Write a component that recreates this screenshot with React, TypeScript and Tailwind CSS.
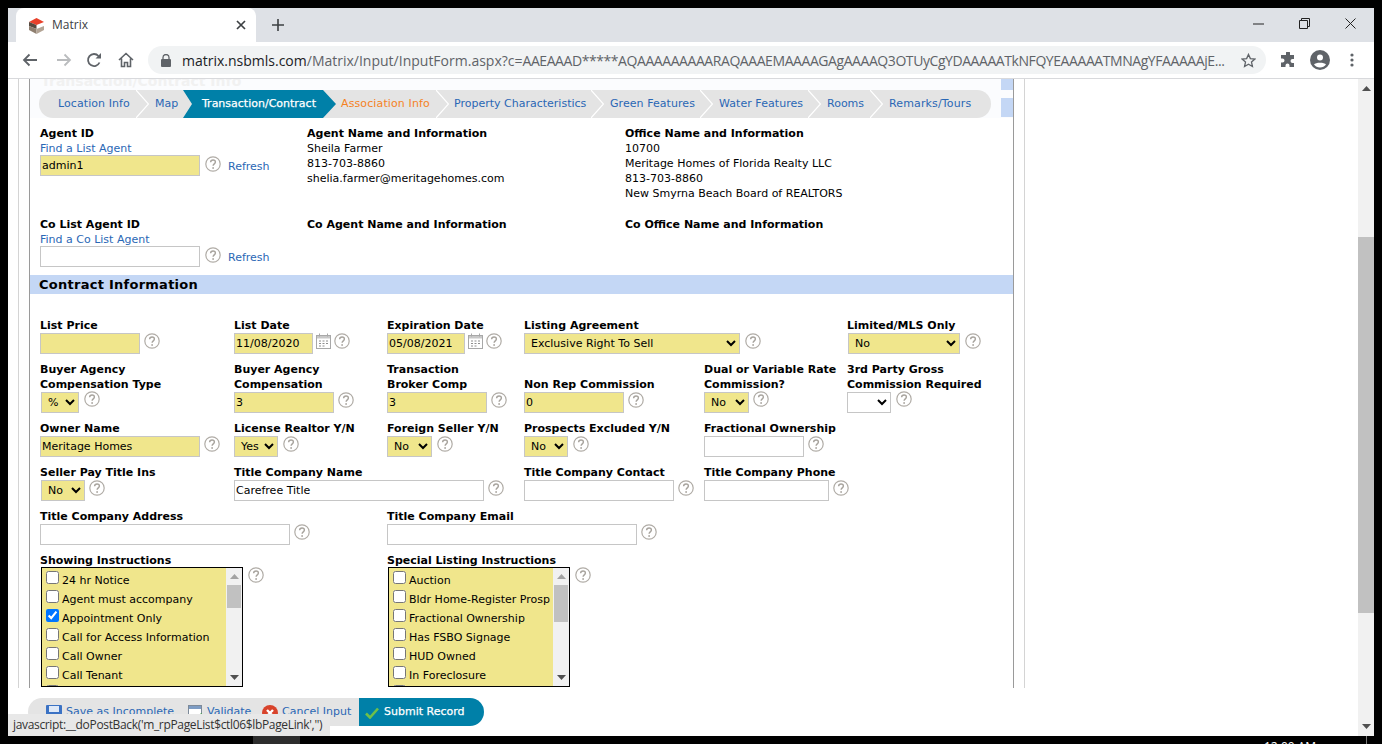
import { ReactNode } from 'react';

const yellow = 'bg-[#f0e68c]';

function Help({ className = '' }: { className?: string }) {
  return (
    <svg width="16" height="16" viewBox="0 0 16 16" className={`shrink-0 ${className}`} fill="none">
      <circle cx="8" cy="8" r="7.2" stroke="#b0aca6" strokeWidth="1.2" />
      <path d="M5.6 6.2C5.7 4.8 6.7 4 8 4c1.4 0 2.4.9 2.4 2 0 1.8-2.3 1.9-2.3 3.8" stroke="#a8a49e" strokeWidth="1.4" />
      <circle cx="8.1" cy="12" r="0.9" fill="#a8a49e" />
    </svg>
  );
}

function Calendar() {
  return (
    <svg width="15" height="16" viewBox="0 0 15 16" className="shrink-0" fill="none">
      <rect x="0.5" y="2.5" width="14" height="13" fill="#fff" stroke="#a8a8a8" />
      <rect x="1" y="3" width="13" height="2.5" fill="#c8c8c8" />
      <path d="M3.5 0.5v3M11.500 0.5v3" stroke="#a8a8a8" />
      <path d="M3 8h2M6.500 8h2M10 8h2M3 10.500h2M6.500 10.500h2M10 10.500h2M3 13h2M6.500 13h2" stroke="#8e8e8e" />
    </svg>
  );
}

function TextBox({ value = '', width, filled }: { value?: string; width: string; filled?: boolean }) {
  return (
    <input
      type="text"
      defaultValue={value}
      className={`${width} h-[21px] shrink-0 border border-[#c6c6c6] px-[1px] text-[11px] text-black ${filled ? yellow : 'bg-white'}`}
    />
  );
}

function Drop({ value = '', width, filled = true }: { value?: string; width: string; filled?: boolean }) {
  return (
    <select
      defaultValue={value}
      className={`${width} h-[21px] shrink-0 border border-[#c6c6c6] pl-[2px] text-[11px] text-black ${filled ? yellow : 'bg-white'}`}
    >
      <option value={value}>{value}</option>
    </select>
  );
}

function Field({ label, children, className = '' }: { label: ReactNode; children: ReactNode; className?: string }) {
  return (
    <div className={`flex flex-col justify-end ${className}`}>
      <div className="font-bold leading-[15px] whitespace-nowrap">{label}</div>
      <div className="flex items-start">{children}</div>
    </div>
  );
}

function ListBox({ width, items, thumb }: { width: string; items: [string, boolean][]; thumb: string }) {
  return (
    <div className={`${width} ${yellow} -mt-[1px] h-[120px] border border-black flex overflow-hidden shrink-0`}>
      <div className="flex-1 min-w-0 overflow-hidden pl-[4px] pt-[4px]">
        {items.map(([name, on]) => (
          <label key={name} className="flex h-[19px] items-start whitespace-nowrap">
            <input type="checkbox" defaultChecked={on} className="m-0 -mt-[1px] mr-[3px] h-[13px] w-[13px] shrink-0" />
            <span className="pt-[1px] leading-[15px]">{name}</span>
          </label>
        ))}
      </div>
      <div className="w-[16px] shrink-0 bg-[#f1f1f1] flex flex-col items-center pt-[6px]">
        <svg width="9" height="5" viewBox="0 0 9 5"><path d="M0 5 4.500 0 9 5z" fill="#a3a3a3" /></svg>
        <div className={`w-[14px] ${thumb} mt-[6px] bg-[#c1c1c1]`} />
        <svg width="9" height="5" viewBox="0 0 9 5" className="mt-auto mb-[6px]"><path d="M0 0 4.500 5 9 0z" fill="#505050" /></svg>
      </div>
    </div>
  );
}

function Chevron({ className }: { className: string }) {
  return (
    <svg width="13" height="28" viewBox="0 0 13 28" className={`shrink-0 ${className}`} fill="none">
      <path d="M0 0 12.500 14 0 28" stroke="#fff" strokeWidth="1.200" />
    </svg>
  );
}

function TabLink({ children, className }: { children: ReactNode; className: string }) {
  return <span className={`shrink-0 whitespace-nowrap text-[#2a67b5] ${className}`}>{children}</span>;
}

function TabBar() {
  return (
    <div className="ml-[9px] flex h-[28px] w-[952px] items-center overflow-hidden rounded-full bg-[#e4e4e4]">
      <TabLink className="ml-[19px] w-[72px] tracking-[0.08px]">Location Info</TabLink>
      <Chevron className="ml-[6px]" />
      <TabLink className="ml-[6px] w-[23px]">Map</TabLink>
      <div className="ml-[5px] flex h-full w-[153px] shrink-0 items-center bg-[#0080a8] pl-[19px] text-white whitespace-nowrap [-webkit-text-stroke:0.25px_#fff] [clip-path:polygon(0_0,140px_0,153px_50%,140px_100%,0_100%,9px_50%)]">
        Transaction/Contract
      </div>
      <span className="ml-[5px] w-[88px] shrink-0 whitespace-nowrap text-[#f5821f] tracking-[0.12px]">Association Info</span>
      <Chevron className="ml-[7px]" />
      <TabLink className="ml-[5px] w-[132px]">Property Characteristics</TabLink>
      <Chevron className="ml-[5px]" />
      <TabLink className="ml-[6px] w-[85px] tracking-[0.06px]">Green Features</TabLink>
      <Chevron className="ml-[5px]" />
      <TabLink className="ml-[6px] w-[84px] tracking-[0.06px]">Water Features</TabLink>
      <Chevron className="ml-[5px]" />
      <TabLink className="ml-[6px] w-[37px]">Rooms</TabLink>
      <Chevron className="ml-[6px]" />
      <TabLink className="ml-[6px] w-[83px] tracking-[0.14px]">Remarks/Tours</TabLink>
    </div>
  );
}

function ChromeBar() {
  return (
    <>
      <div className="flex h-[34px] items-end bg-[#dee1e6] pl-[8px]">
        <div className="flex h-[34px] w-[240px] items-center rounded-t-[8px] bg-white pl-[13px]">
          <svg width="15" height="17" viewBox="0 0 15 17">
            <path d="M0 5 7.500 1 15 5 7.500 8z" fill="#e8412b" />
            <path d="M0 5 7.500 8 7.500 12 0 9z" fill="#55493f" />
            <path d="M0 9 7.500 12 7.500 17 0 13z" fill="#8f7f70" />
            <path d="M7.500 12 15 9 15 13 7.500 17z" fill="#b3a495" />
          </svg>
          <span className="ml-[8px] text-[12px] text-[#3c4043]">Matrix</span>
          <svg width="10" height="10" viewBox="0 0 10 10" className="ml-[148px]"><path d="M1 1l8 8M9 1 1 9" stroke="#3c4043" strokeWidth="1.700" /></svg>
        </div>
        <svg width="12" height="12" viewBox="0 0 12 12" className="mb-[11px] ml-[16px]"><path d="M6 0v12M0 6h12" stroke="#3c4043" strokeWidth="1.600" /></svg>
        <div className="mb-[13px] ml-auto flex items-center text-[#3c4043]">
          <svg width="11" height="2" viewBox="0 0 11 2"><path d="M0 1h11" stroke="#222" /></svg>
          <svg width="11" height="11" viewBox="0 0 11 11" className="ml-[35px]" fill="none"><path d="M.5 2.500h8v8h-8zM2.500 2.500v-2h8v8h-2" stroke="#222" /></svg>
          <svg width="11" height="11" viewBox="0 0 11 11" className="ml-[35px] mr-[18px]"><path d="M.5.5l10 10M10.500.5l-10 10" stroke="#222" /></svg>
        </div>
      </div>
      <div className="flex h-[37px] items-start border-b border-[#d8d9dc] bg-white">
        <div className="flex h-[36px] items-center pl-[10px]">
          <svg width="16" height="14" viewBox="0 0 16 14" className="ml-[4px]" fill="none"><path d="M15 7H2M7.500 1.500 2 7l5.500 5.500" stroke="#5f6368" strokeWidth="1.800" /></svg>
          <svg width="16" height="14" viewBox="0 0 16 14" className="ml-[18px]" fill="none"><path d="M1 7h13M8.500 1.500 14 7l-5.500 5.500" stroke="#babcbe" strokeWidth="1.800" /></svg>
          <svg width="16" height="16" viewBox="0 0 16 16" className="ml-[14px]" fill="none"><path d="M13.500 10.500A6 6 0 1 1 12.500 4" stroke="#5f6368" strokeWidth="1.800" /><path d="M9.500 6.500h5.500V1z" fill="#5f6368" /></svg>
          <svg width="16" height="16" viewBox="0 0 16 16" className="ml-[16px]" fill="none"><path d="M1 8 8 1.500 15 8M3.500 6.500v8h3v-4h3v4h3v-8" stroke="#5f6368" strokeWidth="1.600" /></svg>
        </div>
        <div className="ml-[14px] mt-[4px] flex h-[28px] w-[1118px] items-center rounded-full bg-[#f1f3f4] pl-[13px] pr-[10px]">
          <svg width="10" height="13" viewBox="0 0 10 13"><path d="M2 5.500V3.500a3 3 0 0 1 6 0v2" fill="none" stroke="#5f6368" strokeWidth="1.300" /><rect y="5" width="10" height="8" rx="1" fill="#5f6368" /></svg>
          <span className="ml-[11px] w-[1048px] whitespace-nowrap text-[14px] text-[#202124] [font-family:'Open_Sans',sans-serif]">
            matrix.nsbmls.com<span className="text-[#5f6368]">/Matrix/Input/InputForm.aspx?c=<span className="tracking-[-0.43px]">AAEAAAD*****AQAAAAAAAAARAQAAAEMAAAAGAgAAAAQ3OTUyCgYDAAAAATkNFQYEAAAAATMNAgYFAAAAAjE...</span></span>
          </span>
          <svg width="15" height="15" viewBox="0 0 16 16" className="ml-auto" fill="none"><path d="M8 1.500 10 6l4.800.5-3.600 3.200 1 4.700L8 12l-4.200 2.400 1-4.700L1.200 6.500 6 6z" stroke="#5f6368" strokeWidth="1.400" /></svg>
        </div>
        <div className="flex h-[36px] items-center">
          <svg width="16" height="16" viewBox="0 0 16 16" className="ml-[14px]"><path d="M6 1a2 2 0 0 1 4 0v2h4v4h-1.500a2 2 0 0 0 0 4H14v4H9.500v-1.500a2 2 0 0 0-4 0V15H1v-4.500h1.500a2 2 0 0 0 0-4H1V3h5z" fill="#5f6368" /></svg>
          <svg width="20" height="20" viewBox="0 0 20 20" className="ml-[14px]"><circle cx="10" cy="10" r="10" fill="#5f6368" /><circle cx="10" cy="7.500" r="3" fill="#fff" /><path d="M4 14.500c1.500-2.500 10.500-2.500 12 0-1.500 2-3.500 3-6 3s-4.500-1-6-3z" fill="#fff" /></svg>
          <svg width="4" height="14" viewBox="0 0 4 14" className="ml-[20px]"><circle cx="2" cy="2" r="1.600" fill="#5f6368" /><circle cx="2" cy="7" r="1.600" fill="#5f6368" /><circle cx="2" cy="12" r="1.600" fill="#5f6368" /></svg>
        </div>
      </div>
    </>
  );
}

function AgentSection() {
  return (
    <div className="grid grid-cols-[267px_318px_1fr] pl-[10px] pt-[8px]">
      <div>
        <div className="font-bold leading-[15px]">Agent ID</div>
        <div className="h-[14px] leading-[15px] text-[#2a67b5]">Find a List Agent</div>
        <div className="flex items-start">
          <TextBox value="admin1" width="w-[160px]" filled />
          <Help className="ml-[5px] mt-[1px]" />
          <span className="ml-[7px] mt-[4px] leading-[15px] text-[#2a67b5]">Refresh</span>
        </div>
      </div>
      <div className="leading-[15px]">
        <div className="font-bold">Agent Name and Information</div>
        <div>Sheila Farmer</div>
        <div>813-703-8860</div>
        <div>shelia.farmer@meritagehomes.com</div>
      </div>
      <div className="leading-[15px]">
        <div className="font-bold">Office Name and Information</div>
        <div>10700</div>
        <div>Meritage Homes of Florida Realty LLC</div>
        <div>813-703-8860</div>
        <div>New Smyrna Beach Board of REALTORS</div>
      </div>
      <div className="mt-[16px]">
        <div className="font-bold leading-[15px]">Co List Agent ID</div>
        <div className="h-[14px] leading-[15px] text-[#2a67b5]">Find a Co List Agent</div>
        <div className="flex items-start">
          <TextBox width="w-[160px]" />
          <Help className="ml-[5px] mt-[1px]" />
          <span className="ml-[7px] mt-[4px] leading-[15px] text-[#2a67b5]">Refresh</span>
        </div>
      </div>
      <div className="mt-[16px] font-bold leading-[15px]">Co Agent Name and Information</div>
      <div className="mt-[16px] font-bold leading-[15px]">Co Office Name and Information</div>
    </div>
  );
}

function ContractForm() {
  return (
    <div className="grid grid-cols-[194px_153px_137px_180px_143px_1fr] gap-y-[8px] pl-[10px] pt-[24px]">
      <Field label="List Price"><TextBox width="w-[100px]" filled /><Help className="ml-[4px]" /></Field>
      <Field label="List Date"><TextBox value="11/08/2020" width="w-[79px]" filled /><span className="ml-[3px]"><Calendar /></span><Help className="ml-[3px]" /></Field>
      <Field label="Expiration Date"><TextBox value="05/08/2021" width="w-[78px]" filled /><span className="ml-[3px]"><Calendar /></span><Help className="ml-[3px]" /></Field>
      <Field label="Listing Agreement" className="col-span-2"><Drop value="Exclusive Right To Sell" width="w-[216px]" /><Help className="ml-[5px]" /></Field>
      <Field label="Limited/MLS Only"><div className="ml-[1px]" /><Drop value="No" width="w-[112px]" /><Help className="ml-[5px]" /></Field>

      <Field label={<>Buyer Agency<br />Compensation Type</>}><div className="ml-[1px]" /><Drop value="%" width="w-[38px]" /><Help className="ml-[5px] -mt-[1px]" /></Field>
      <Field label={<>Buyer Agency<br />Compensation</>}><TextBox value="3" width="w-[100px]" filled /><Help className="ml-[4px]" /></Field>
      <Field label={<>Transaction<br />Broker Comp</>}><TextBox value="3" width="w-[100px]" filled /><Help className="ml-[4px]" /></Field>
      <Field label="Non Rep Commission"><TextBox value="0" width="w-[100px]" filled /><Help className="ml-[4px]" /></Field>
      <Field label={<>Dual or Variable Rate<br />Commission?</>}><Drop value="No" width="w-[45px]" /><Help className="ml-[4px] -mt-[1px]" /></Field>
      <Field label={<>3rd Party Gross<br />Commission Required</>}><Drop width="w-[44px]" filled={false} /><Help className="ml-[5px] -mt-[1px]" /></Field>

      <Field label="Owner Name"><TextBox value="Meritage Homes" width="w-[160px]" filled /><Help className="ml-[4px]" /></Field>
      <Field label="License Realtor Y/N"><Drop value="Yes" width="w-[44px]" /><Help className="ml-[5px]" /></Field>
      <Field label="Foreign Seller Y/N"><Drop value="No" width="w-[45px]" /><Help className="ml-[5px]" /></Field>
      <Field label="Prospects Excluded Y/N"><Drop value="No" width="w-[44px]" /><Help className="ml-[5px]" /></Field>
      <Field label="Fractional Ownership" className="col-span-2"><TextBox width="w-[100px]" /><Help className="ml-[4px]" /></Field>

      <Field label="Seller Pay Title Ins"><div className="ml-[1px]" /><Drop value="No" width="w-[44px]" /><Help className="ml-[4px]" /></Field>
      <Field label="Title Company Name" className="col-span-2"><TextBox value="Carefree Title" width="w-[250px]" /><Help className="ml-[4px]" /></Field>
      <Field label="Title Company Contact"><TextBox width="w-[150px]" /><Help className="ml-[4px]" /></Field>
      <Field label="Title Company Phone" className="col-span-2"><TextBox width="w-[125px]" /><Help className="ml-[4px]" /></Field>

      <Field label="Title Company Address" className="col-span-2"><TextBox width="w-[250px]" /><Help className="ml-[4px]" /></Field>
      <Field label="Title Company Email" className="col-span-4"><TextBox width="w-[250px]" /><Help className="ml-[4px]" /></Field>

      <Field label="Showing Instructions" className="col-span-2">
        <div className="ml-[1px]" />
        <ListBox
          width="w-[202px]"
          thumb="h-[23px]"
          items={[
            ['24 hr Notice', false],
            ['Agent must accompany', false],
            ['Appointment Only', true],
            ['Call for Access Information', false],
            ['Call Owner', false],
            ['Call Tenant', false],
            ['Call Listing Agent', false],
          ]}
        />
        <Help className="ml-[5px] -mt-[1px]" />
      </Field>
      <Field label="Special Listing Instructions" className="col-span-4">
        <div className="ml-[1px]" />
        <ListBox
          width="w-[182px]"
          thumb="h-[37px]"
          items={[
            ['Auction', false],
            ['Bldr Home-Register Prosp', false],
            ['Fractional Ownership', false],
            ['Has FSBO Signage', false],
            ['HUD Owned', false],
            ['In Foreclosure', false],
            ['Lease Option', false],
          ]}
        />
        <Help className="ml-[5px] -mt-[1px]" />
      </Field>
    </div>
  );
}

function FooterBar() {
  return (
    <div className="absolute left-[28px] top-[698px] flex h-[28px] items-center text-[#2a67b5]">
      <div className="flex h-full w-[331px] items-center rounded-l-full bg-[#e4e4e4] pl-[18px] pt-[1px]">
        <svg width="16" height="16" viewBox="0 0 16 16" className="shrink-0"><rect width="16" height="16" rx="1" fill="#3b72c4" /><rect x="3" y="1" width="10" height="6" fill="#dfe9f7" /><rect x="4" y="10" width="8" height="6" fill="#c8d6ea" /></svg>
        <span className="ml-[4px] w-[109px] whitespace-nowrap">Save as Incomplete</span>
        <svg width="15" height="16" viewBox="0 0 15 16" className="ml-[13px] shrink-0"><rect x="0.500" y="0.500" width="13" height="13" fill="#fff" stroke="#7d8a99" /><rect x="1" y="1" width="12" height="3" fill="#7d9cc4" /><path d="M5 12l3 3 6-6" fill="none" stroke="#3aa53a" strokeWidth="2.500" /></svg>
        <span className="ml-[4px] w-[44px] whitespace-nowrap">Validate</span>
        <svg width="16" height="16" viewBox="0 0 16 16" className="ml-[11px] shrink-0"><circle cx="8" cy="8" r="8" fill="#d8432b" /><path d="M5 5l6 6M11 5l-6 6" stroke="#fff" strokeWidth="2.400" /></svg>
        <span className="ml-[4px] whitespace-nowrap">Cancel Input</span>
      </div>
      <div className="flex h-full w-[125px] items-center rounded-r-full bg-[#0080a8] pl-[6px] pt-[1px] text-white [-webkit-text-stroke:0.25px_#fff]">
        <svg width="14" height="12" viewBox="0 0 14 12" className="shrink-0"><path d="M1 6.500 5 10.500 13 1.500" fill="none" stroke="#6fbf4a" strokeWidth="2.600" /></svg>
        <span className="ml-[5px] whitespace-nowrap">Submit Record</span>
      </div>
    </div>
  );
}

export default function App() {
  return (
    <div className="relative flex h-[744px] w-[1382px] flex-col overflow-hidden bg-black text-[11px] text-black [font-family:'DejaVu_Sans','Liberation_Sans',sans-serif]">
      <div className="mx-[8px] mt-[8px] flex h-[728px] flex-col bg-white">
        <div className="[font-family:'Open_Sans',sans-serif]">
          <ChromeBar />
        </div>
        <div className="flex min-h-0 flex-1">
          <div className="min-w-0 flex-1 pl-[10px]">
            <div className="h-[609px] w-[1007px] border-x border-[#d4d4d4] pl-[10px]">
              <div className="h-full w-[985px] overflow-hidden border-x border-[#9a9a9a]">
                <div className="flex h-[39px] bg-[#fbfcfe]">
                  <div className="w-[971px]">
                    <div className="h-[11px] overflow-hidden pl-[11px] text-[14px] font-bold leading-[4px] text-[#f1f1f1]">Transaction/Contract Info</div>
                    <TabBar />
                  </div>
                  <div className="w-[12px]">
                    <div className="h-[11px] bg-[#c4d7f5]" />
                    <div className="mt-[8px] h-[19px] bg-[#c4d7f5]" />
                  </div>
                </div>
                <AgentSection />
                <div className="mt-[8px] h-[19px] bg-[#c4d7f5] pl-[9px] text-[13px] font-bold leading-[19px] tracking-[0.26px]">Contract Information</div>
                <ContractForm />
              </div>
            </div>
          </div>
          <div className="flex w-[16px] shrink-0 flex-col items-center bg-[#f1f1f1]">
            <svg width="9" height="5" viewBox="0 0 9 5" className="mt-[7px]"><path d="M0 5 4.500 0 9 5z" fill="#505050" /></svg>
            <div className="mt-[146px] h-[376px] w-full bg-[#c1c1c1]" />
            <svg width="9" height="5" viewBox="0 0 9 5" className="mb-[7px] mt-auto"><path d="M0 0 4.500 5 9 0z" fill="#505050" /></svg>
          </div>
        </div>
      </div>
      <div className="flex h-[8px] overflow-hidden">
        <div className="ml-[253px] h-full w-[47px] bg-[#2d2d2d]" />
        <span className="ml-[964px] mt-[5px] whitespace-nowrap text-[12px] leading-[12px] text-white [font-family:'Open_Sans',sans-serif]">12:00 AM</span>
        <div className="ml-[50px] h-full w-[1px] bg-[#777]" />
      </div>
      <FooterBar />
      <div className="absolute left-[8px] top-[714px] flex h-[22px] w-[322px] items-center bg-[#e8e8e8] pl-[5px] text-[12px] tracking-[-0.34px] text-[#333] whitespace-nowrap [font-family:'Open_Sans',sans-serif]">
        javascript:__doPostBack('m_rpPageList$ctl06$lbPageLink','')
      </div>
    </div>
  );
}
